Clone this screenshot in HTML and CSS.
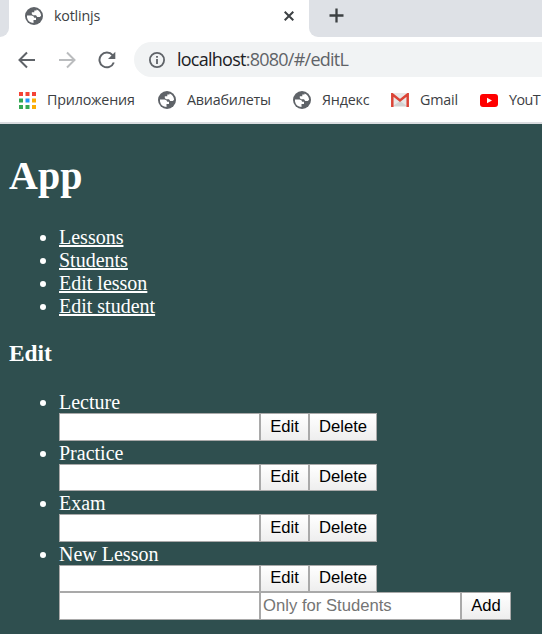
FILE: index.html
```html
<!DOCTYPE html>
<html lang="ru">
<head>
<meta charset="utf-8">
<title>kotlinjs</title>
<link rel="stylesheet" href="styles.css">
</head>
<body>
<svg class="symbols" aria-hidden="true">
  <symbol id="globe" viewBox="0 0 18 18">
    <circle cx="9" cy="9" r="9" fill="#5f6368"/>
    <path fill="#fff" d="M2 8.5H6.5Q9 8.7 9.2 10.8H11V13H8.5V15.9Q3 15.7 2 10.5ZM11.5 2.4Q15.8 4 16.1 8.8L14.8 10H12.2L11 8.3H8L6.8 7.1V5.2H9.3V3.5H11.5Z"/>
  </symbol>
</svg>
<header>
  <div class="tabs">
    <div class="strip-left"></div>
    <div class="tab">
      <svg class="favicon"><use href="#globe"/></svg>
      <span class="tab-title">kotlinjs</span>
      <svg class="close" viewBox="0 0 10 10"><path d="M.7.7 9.3 9.3M9.3.7.7 9.3"/></svg>
    </div>
    <div class="strip-right">
      <svg class="plus" viewBox="0 0 15 15"><path d="M7.5.5v14M.5 7.5h14"/></svg>
    </div>
  </div>
  <div class="toolbar">
    <svg class="nav back" viewBox="0 0 18 18"><path d="M17 9H2M9 1.5 1.5 9 9 16.5"/></svg>
    <svg class="nav forward" viewBox="0 0 18 18"><path d="M1 9h15M9 1.5 16.5 9 9 16.5"/></svg>
    <svg class="nav reload" viewBox="0 0 18 18"><path d="M15.8 11.5A7.4 7.4 0 1 1 14.6 4.2"/><path class="solid" d="M17.3.7V8H10Z"/></svg>
    <div class="omnibox">
      <svg class="info" viewBox="0 0 16 16"><circle cx="8" cy="8" r="7.1"/><path d="M8 7v5M8 4v1.8"/></svg>
      <span class="url"><b>localhost</b>:8080/#/editL</span>
    </div>
  </div>
  <nav class="bookmarks">
    <div class="bookmark apps">
      <svg viewBox="0 0 17 17">
        <path fill="#f44336" d="M0 0h4v4H0zM6.5 0h4v4h-4zM13 0h4v4h-4z"/>
        <path fill="#34a853" d="M0 6.5h4v4H0zM0 13h4v4H0zM6.5 13h4v4h-4z"/>
        <path fill="#2196f3" d="M6.5 6.5h4v4h-4z"/>
        <path fill="#fbad05" d="M13 6.5h4v4h-4zM13 13h4v4h-4z"/>
      </svg>
      <span>Приложения</span>
    </div>
    <div class="bookmark tickets"><svg><use href="#globe"/></svg><span>Авиабилеты</span></div>
    <div class="bookmark yandex"><svg><use href="#globe"/></svg><span>Яндекс</span></div>
    <div class="bookmark gmail">
      <svg viewBox="0 0 18 14"><path fill="#e8e8e8" d="M1 0h16v14H1z"/><path fill="#d2d2d2" d="m2 13 7-5 7 5z"/><path fill="none" stroke="#db4437" stroke-width="2.5" d="M1.3 14V1.3L9 7.5l7.7-6.2V14"/></svg>
      <span>Gmail</span>
    </div>
    <div class="bookmark youtube">
      <svg viewBox="0 0 18 13"><rect width="18" height="13" rx="3" fill="#f00"/><path fill="#fff" d="m7 3.8 5 2.7-5 2.7z"/></svg>
      <span>YouT</span>
    </div>
  </nav>
</header>
<main>
  <h1>App</h1>
  <ul class="links">
    <li><a href="#/lessons">Lessons</a></li>
    <li><a href="#/students">Students</a></li>
    <li><a href="#/editL">Edit lesson</a></li>
    <li><a href="#/editS">Edit student</a></li>
  </ul>
  <h3>Edit</h3>
  <ul class="lessons">
    <li>Lecture<div class="row"><input type="text"><button class="edit">Edit</button><button class="delete">Delete</button></div></li>
    <li>Practice<div class="row"><input type="text"><button class="edit">Edit</button><button class="delete">Delete</button></div></li>
    <li>Exam<div class="row"><input type="text"><button class="edit">Edit</button><button class="delete">Delete</button></div></li>
    <li>New Lesson<div class="row"><input type="text"><button class="edit">Edit</button><button class="delete">Delete</button></div>
      <div class="row"><input type="text"><input type="text" placeholder="Only for Students"><button class="add">Add</button></div></li>
  </ul>
</main>
</body>
</html>
```
FILE: styles.css
```css
* { box-sizing: border-box; }
html, body { margin: 0; height: 634px; overflow: hidden; }
body { background: #2f4f4f; color: #fff; font: 20px/23px "Liberation Serif", serif; }
svg { display: block; flex: none; }
.symbols { display: none; }

header {
  height: 124px;
  overflow: hidden;
  background: #fff;
  border-bottom: 2px solid #dadce0;
  color: #3c4043;
  font-family: "Open Sans", sans-serif;
  white-space: nowrap;
}
.tabs { display: flex; height: 37px; }
.strip-left { width: 9px; background: #dee1e6; border-radius: 0 0 9px 0; }
.tab { display: flex; align-items: center; width: 300px; padding: 0 15px 5px 16px; }
.favicon { width: 18px; height: 18px; }
.tab-title { margin-left: 11px; padding-bottom: 1px; font-size: 14.3px; letter-spacing: -.2px; }
.close { width: 10px; height: 10px; margin-left: auto; stroke: #3c4043; stroke-width: 2; }
.strip-right { flex: 1; padding: 8px 0 0 20px; background: #dee1e6; border-radius: 0 0 0 9px; }
.plus { width: 15px; height: 15px; stroke: #3c4043; stroke-width: 2.3; }

.toolbar { display: flex; align-items: center; height: 45px; padding-left: 18px; }
.nav { width: 18px; height: 18px; fill: none; stroke: #5f6368; stroke-width: 2; }
.forward { margin-left: 22px; stroke: #babcbe; }
.reload { margin-left: 22px; }
.reload .solid { fill: #5f6368; stroke: none; }
.omnibox { display: flex; align-items: center; flex: 1; height: 35px; margin-left: 18px; padding-left: 15px; background: #f1f3f4; border-radius: 18px 0 0 18px; }
.info { width: 16px; height: 16px; fill: none; stroke: #5f6368; stroke-width: 1.8; }
.url { margin-left: 12px; color: #5f6368; font-size: 18px; letter-spacing: -.75px; }
.url b { color: #202124; font-weight: 400; }

.bookmarks { display: flex; align-items: center; height: 36px; padding-left: 19px; font-size: 14.3px; }
.bookmark { display: flex; align-items: center; flex: none; gap: 11px; letter-spacing: -.2px; }
.bookmark span { padding-bottom: 1px; }
.bookmark svg { width: 18px; height: 18px; }
.apps { width: 139px; }
.apps svg { width: 17px; height: 17px; }
.tickets { width: 135px; }
.yandex { width: 98px; }
.gmail { width: 89px; }
.gmail svg { height: 14px; }
.youtube svg { height: 13px; }
.youtube span { letter-spacing: -.5px; }

main { padding: 29px 9px 0; }
h1 { margin: 0 0 27px; font-size: 40px; line-height: 46px; }
ul { margin: 0; padding-left: 50px; }
a { color: #fff; }
h3 { margin: 22px 0 24px; font-size: 23.4px; line-height: 27px; }
.lessons li { margin-bottom: 1px; }
.row { display: flex; height: 27.5px; }
.row:first-of-type { margin-top: -1px; }
input, button { height: 27.5px; margin: 0; border: 1px solid #a9a9a9; border-radius: 0; font: 16.67px "Liberation Sans", sans-serif; }
input { width: 201px; padding: 1px 2px; background: #fff; }
input::placeholder { color: #757575; }
button { padding: 0; background: linear-gradient(#fff, #eee); color: #000; }
.edit { width: 49px; }
.delete { width: 68px; }
.add { width: 50px; }
```
